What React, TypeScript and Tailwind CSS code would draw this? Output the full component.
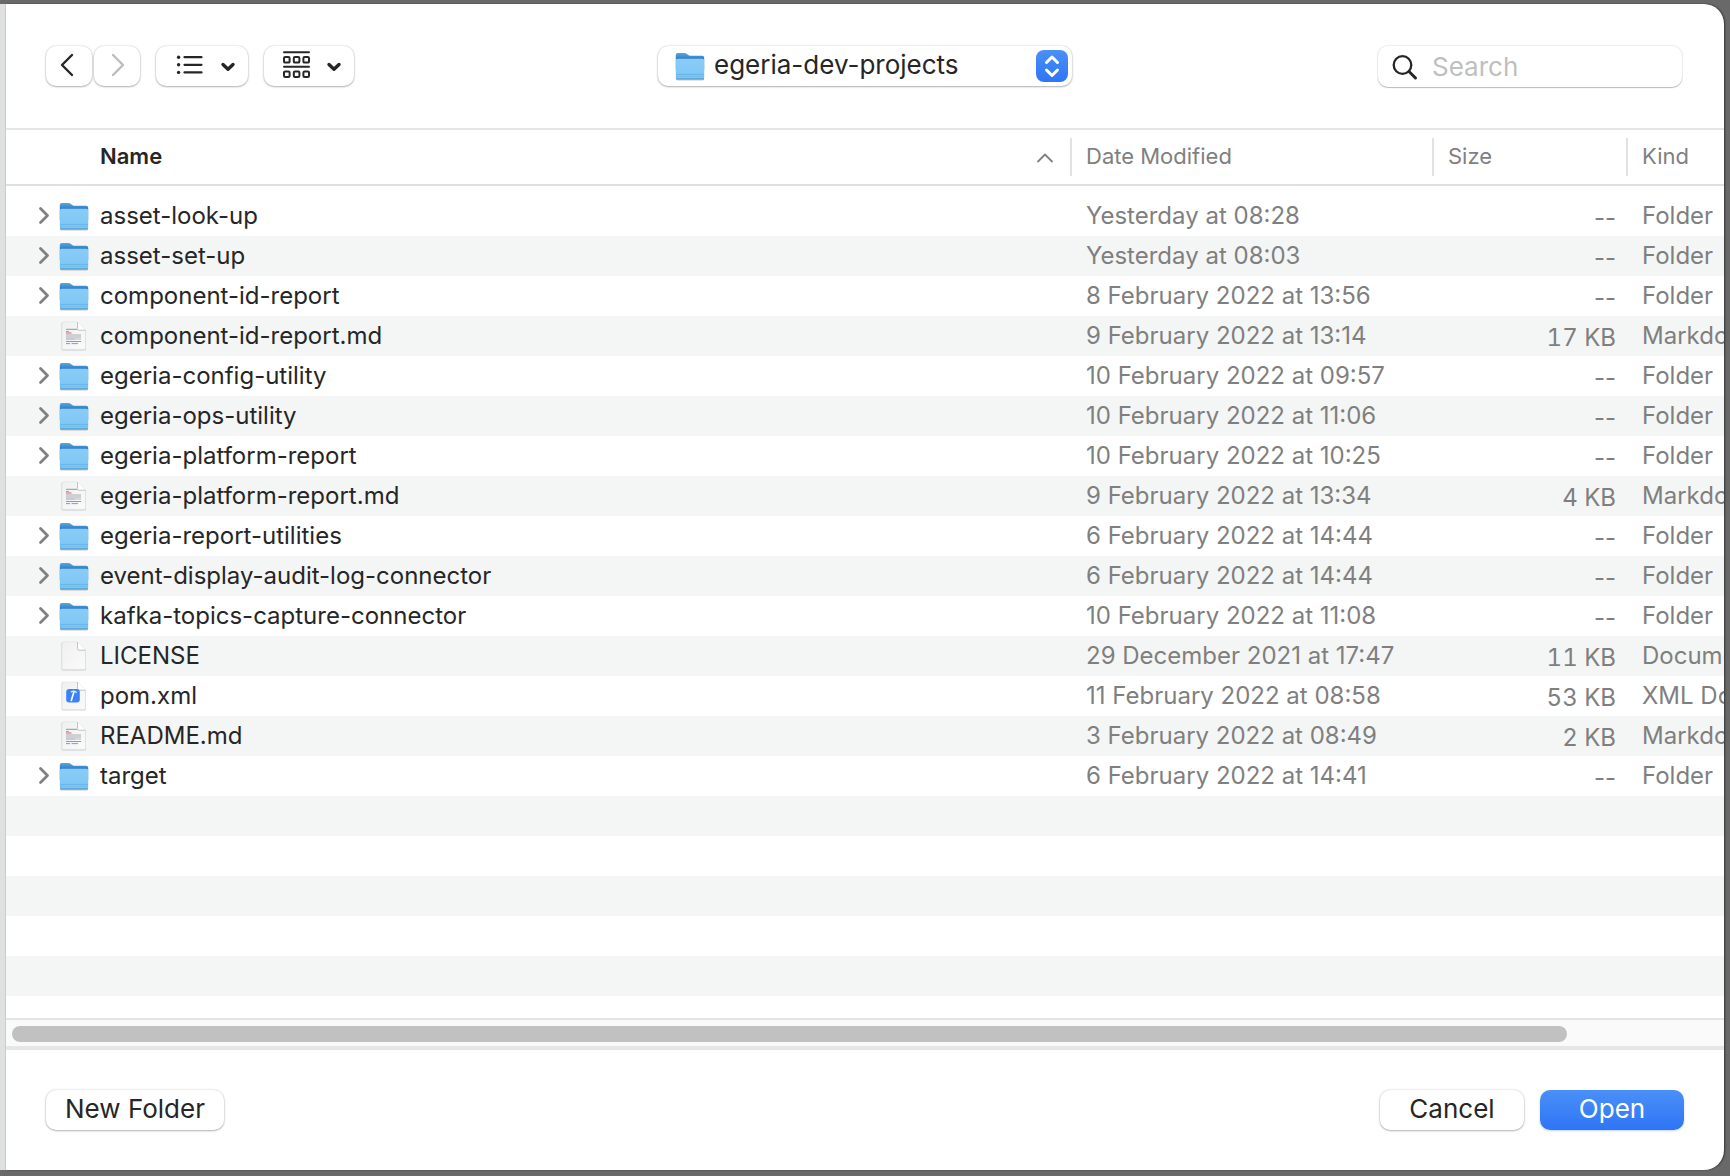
import React from "react";

type Kind = "folder" | "markdown" | "plain" | "xml";

interface Entry {
  name: string;
  date: string;
  size: string;
  kind: string;
  icon: Kind;
}

const folder = (name: string, date: string): Entry => ({ name, date, size: "--", kind: "Folder", icon: "folder" });

const entries: Entry[] = [
  folder("asset-look-up", "Yesterday at 08:28"),
  folder("asset-set-up", "Yesterday at 08:03"),
  folder("component-id-report", "8 February 2022 at 13:56"),
  { name: "component-id-report.md", date: "9 February 2022 at 13:14", size: "17 KB", kind: "Markdown Document", icon: "markdown" },
  folder("egeria-config-utility", "10 February 2022 at 09:57"),
  folder("egeria-ops-utility", "10 February 2022 at 11:06"),
  folder("egeria-platform-report", "10 February 2022 at 10:25"),
  { name: "egeria-platform-report.md", date: "9 February 2022 at 13:34", size: "4 KB", kind: "Markdown Document", icon: "markdown" },
  folder("egeria-report-utilities", "6 February 2022 at 14:44"),
  folder("event-display-audit-log-connector", "6 February 2022 at 14:44"),
  folder("kafka-topics-capture-connector", "10 February 2022 at 11:08"),
  { name: "LICENSE", date: "29 December 2021 at 17:47", size: "11 KB", kind: "Document", icon: "plain" },
  { name: "pom.xml", date: "11 February 2022 at 08:58", size: "53 KB", kind: "XML Document", icon: "xml" },
  { name: "README.md", date: "3 February 2022 at 08:49", size: "2 KB", kind: "Markdown Document", icon: "markdown" },
  folder("target", "6 February 2022 at 14:41"),
];

const raised = "rounded-[10px] bg-white shadow-[0_0_2px_rgba(0,0,0,0.22),0_1px_2px_rgba(0,0,0,0.26)]";
const columns = "grid grid-cols-[minmax(0,1fr)_362px_194px_98px]";

function Gradients() {
  return (
    <svg className="absolute size-0" aria-hidden="true">
      <defs>
        <linearGradient id="folderBack" x1="0" y1="0" x2="0" y2="1">
          <stop offset="0" stopColor="#5aa5d8" />
          <stop offset="0.15" stopColor="#4795d0" />
          <stop offset="0.33" stopColor="#2f7fc8" />
          <stop offset="1" stopColor="#3b8fd0" />
        </linearGradient>
        <linearGradient id="folderFront" x1="0" y1="0" x2="0" y2="1">
          <stop offset="0" stopColor="#8accf5" />
          <stop offset="1" stopColor="#7cc6f5" />
        </linearGradient>
        <linearGradient id="sheet" x1="0" y1="0" x2="1" y2="1">
          <stop offset="0" stopColor="#f0f0f0" />
          <stop offset="1" stopColor="#fafafa" />
        </linearGradient>
      </defs>
    </svg>
  );
}

function FolderIcon() {
  return (
    <svg className="h-8 w-[30px] shrink-0" viewBox="0 0 30 32" aria-hidden="true">
      <path d="M1.2 28.4h27.6v1.2q0 .8-.9.8H2.1q-.9 0-.9-.8z" fill="#000" opacity="0.22" />
      <path d="M.8 5q0-2 2-2h6.600q1 0 1.800.6l2 1.500q.8.600 1.800.6H27.200q2 0 2 2V20H.8z" fill="url(#folderBack)" />
      <path d="M.8 10.300q0-1.600 1.600-1.600H27.600q1.600 0 1.600 1.600V28q0 1.500-1.500 1.500H2.300Q.8 29.500.8 28z" fill="url(#folderFront)" />
      <path d="M1 24.400h28" stroke="#62aee0" strokeWidth="0.8" />
      <path d="M1 26.400h28" stroke="#6cb6e6" strokeWidth="0.600" />
      <path d="M1 28.900h28" stroke="#4a96c8" strokeWidth="1" />
    </svg>
  );
}

function DocIcon({ kind }: { kind: Kind }) {
  return (
    <svg className="h-8 w-[30px] shrink-0" viewBox="0 0 30 32" aria-hidden="true">
      <path d="M2.500 3.500q0-1.500 1.500-1.500H18.500L27 10.500V29q0 1.500-1.500 1.500H4Q2.500 30.500 2.500 29z" fill="#000" opacity="0.16" />
      <path d="M3 3.500Q3 2 4.500 2H18.500L26.500 10.200V28q0 1.500-1.500 1.500H4.500Q3 29.500 3 28z" fill="url(#sheet)" stroke="#dcdcdc" strokeWidth="0.500" />
      <path d="M18.500 2 26.500 10.200H20q-1.500 0-1.500-1.500z" fill="#fff" />
      <path d="M18.500 2V8.700q0 1.500 1.500 1.500h6.500" fill="none" stroke="#bcbcbc" strokeWidth="0.900" />
      {kind === "markdown" && (
        <g strokeWidth="1" fill="none">
          <path d="M7 9.300h11" stroke="#7fa0a6" />
          <path d="M7 11.500h3" stroke="#c98abc" />
          <path d="M7 13h5.500" stroke="#e2598c" />
          <path d="M7 15h15M7 17h15" stroke="#a8aaae" />
          <path d="M7 19h9" stroke="#9d9ac8" />
          <path d="M16 19h6" stroke="#a8c0bd" />
          <path d="M7 21.500h15" stroke="#96989c" />
          <path d="M7 23.600h4M12.500 23.600h6.500" stroke="#8d96cf" />
        </g>
      )}
      {kind === "xml" && (
        <g>
          <rect x="7.200" y="9" width="13.600" height="13.600" rx="3" fill="#3b82f6" />
          <path d="M15 11.500 12.300 20.500" stroke="#fff" strokeWidth="1.600" strokeLinecap="round" />
          <path d="M11.800 12.200q2.200-1.800 5-.4l.6 1.200" stroke="#dbe8ff" strokeWidth="1.300" fill="none" />
        </g>
      )}
    </svg>
  );
}

function DownChevron() {
  return (
    <svg className="h-10 w-4" viewBox="0 0 16 40" fill="none" stroke="#262626" strokeWidth="3.400" strokeLinecap="round" strokeLinejoin="round" aria-hidden="true">
      <path d="M3 18.500 8 23.300 13 18.500" />
    </svg>
  );
}

function Toolbar() {
  return (
    <header className="grid h-[126px] shrink-0 grid-cols-[1fr_414px_1fr] items-start border-b-2 border-[#e5e5e5] px-10 pt-[42px]">
      <div className="flex">
        <button type="button" aria-label="Back" className={`flex h-10 w-[46px] justify-center ${raised}`}>
          <svg className="h-10 w-[46px]" viewBox="0 0 46 40" fill="none" stroke="#262626" strokeWidth="2.400" strokeLinecap="round" strokeLinejoin="round">
            <path d="M26 9 16 19 26 29" />
          </svg>
        </button>
        <button type="button" aria-label="Forward" disabled className={`ml-0.5 flex h-10 w-[46px] justify-center ${raised}`}>
          <svg className="h-10 w-[46px]" viewBox="0 0 46 40" fill="none" stroke="#bcbcbc" strokeWidth="2.400" strokeLinecap="round" strokeLinejoin="round">
            <path d="M19 9 29 19 19 29" />
          </svg>
        </button>
        <button type="button" aria-label="List view" className={`ml-4 flex h-10 w-[92px] items-center justify-between pr-3 pl-5 ${raised}`}>
          <svg className="h-10 w-7" viewBox="0 0 28 40" aria-hidden="true">
            <g fill="#262626">
              <circle cx="2.600" cy="11.200" r="1.700" />
              <circle cx="2.600" cy="18.800" r="1.700" />
              <circle cx="2.600" cy="26.400" r="1.700" />
            </g>
            <path d="M8.500 11.200H25.500M8.500 18.800H25.500M8.500 26.400H25.500" stroke="#262626" strokeWidth="2.200" strokeLinecap="round" />
          </svg>
          <DownChevron />
        </button>
        <button type="button" aria-label="Group items" className={`ml-4 flex h-10 w-[90px] items-center justify-between pr-3 pl-[18px] ${raised}`}>
          <svg className="h-10 w-7" viewBox="0 0 28 40" fill="none" stroke="#262626" strokeWidth="2" strokeLinecap="round" aria-hidden="true">
            <path d="M2 6.200H27M2 20.800H27" />
            <rect x="2" y="11" width="5.600" height="5.600" rx="1.200" />
            <rect x="11.800" y="11" width="5.600" height="5.600" rx="1.200" />
            <rect x="21.400" y="11" width="5.600" height="5.600" rx="1.200" />
            <rect x="2" y="25.400" width="5.600" height="5.600" rx="1.200" />
            <rect x="11.800" y="25.400" width="5.600" height="5.600" rx="1.200" />
            <rect x="21.400" y="25.400" width="5.600" height="5.600" rx="1.200" />
          </svg>
          <DownChevron />
        </button>
      </div>

      <div className={`relative h-10 ${raised}`}>
        <div className="pointer-events-none absolute top-1 left-[17px]">
          <FolderIcon />
        </div>
        <select aria-label="Current folder" className="block h-10 w-full appearance-none rounded-[10px] bg-transparent pb-0.5 pl-14 text-[26px] leading-9 text-[#262626]">
          <option>egeria-dev-projects</option>
        </select>
        <div className="pointer-events-none absolute top-1 right-1 size-8 rounded-lg bg-linear-to-b from-[#4a90f8] to-[#2f74f5]">
          <svg className="size-8" viewBox="0 0 32 32" fill="none" stroke="#fff" strokeWidth="3" strokeLinecap="round" strokeLinejoin="round" aria-hidden="true">
            <path d="M10.500 12.500 16 7 21.500 12.500M10.500 20 16 25.500 21.500 20" />
          </svg>
        </div>
      </div>

      <label className="mr-0.5 flex h-[41px] w-[304px] items-center justify-self-end rounded-[10px] bg-white pl-3.5 shadow-[0_0_1px_1px_rgba(0,0,0,0.07),0_1px_1px_rgba(0,0,0,0.22)]">
        <svg className="size-7 shrink-0" viewBox="0 0 28 28" fill="none" stroke="#262626" strokeLinecap="round" aria-hidden="true">
          <circle cx="10.500" cy="12" r="8.800" strokeWidth="2.300" />
          <path d="M17 18.500 23.500 25" strokeWidth="3" />
        </svg>
        <input type="text" aria-label="Search" placeholder="Search" className="ml-3 w-full min-w-0 bg-transparent text-[26px] leading-10 outline-none placeholder:text-[#bfbfbf]" />
      </label>
    </header>
  );
}

function FileTable() {
  const head = "h-[38px] border-l-2 border-[#e2e2e2] pl-3.5 text-left font-normal leading-9 text-[#7f7f7f]";
  return (
    <div className="flex min-h-0 flex-1 flex-col overflow-hidden">
      <table className="block shrink-0">
        <thead className="block h-14 border-b-2 border-[#e0e0e0] text-[22px]">
          <tr className={`pt-2 ${columns}`}>
            <th aria-sort="ascending" className="flex h-[38px] items-start justify-between pr-4 pl-[94px] text-left leading-9 font-semibold text-[#262626]">
              Name
              <svg className="h-9 w-[18px]" viewBox="0 0 18 36" fill="none" stroke="#808080" strokeWidth="1.800" strokeLinecap="round" strokeLinejoin="round" aria-hidden="true">
                <path d="M2 23.500 9 16.500 16 23.500" />
              </svg>
            </th>
            <th className={head}>Date Modified</th>
            <th className={head}>Size</th>
            <th className={head}>Kind</th>
          </tr>
        </thead>
        <tbody className="block pt-2.5 text-2xl leading-10 text-[#7f7f7f]">
          {entries.map((e) => (
            <tr key={e.name} className={`h-10 items-start whitespace-nowrap even:bg-[#f4f5f5] ${columns}`}>
              <td className="flex h-10 items-center pl-[30px] leading-10 text-[#262626]">
                {e.icon === "folder" ? (
                  <button type="button" aria-label={`Expand ${e.name}`} className="mr-[7px] h-10 w-4">
                    <svg className="h-10 w-4" viewBox="0 0 16 40" fill="none" stroke="#808080" strokeWidth="2.800" strokeLinecap="round" strokeLinejoin="round">
                      <path d="M4.500 12.500 11.500 19.500 4.500 26.500" />
                    </svg>
                  </button>
                ) : (
                  <span className="mr-[7px] w-4" />
                )}
                {e.icon === "folder" ? <FolderIcon /> : <DocIcon kind={e.icon} />}
                <span className="ml-[11px]">{e.name}</span>
              </td>
              <td className="pl-4 leading-10">{e.date}</td>
              <td className={`pt-0.5 pr-2.5 text-right leading-10 ${e.icon === "folder" ? "" : "tabular-nums"}`}>{e.size}</td>
              <td className="overflow-hidden pl-4 leading-10">{e.kind}</td>
            </tr>
          ))}
        </tbody>
      </table>
      <div className="flex-1 bg-[repeating-linear-gradient(to_bottom,#f4f5f5_0_40px,#ffffff_40px_80px)]" />
    </div>
  );
}

export default function App() {
  return (
    <div className="flex h-screen bg-[#696969] pt-1 pb-1.5 font-['Inter',sans-serif]">
      <Gradients />
      <div className="w-1.5 shrink-0 border-r border-[#d0d2d1] bg-[#dfe1e0]" />
      <main className="mr-1.5 flex min-w-0 flex-1 flex-col overflow-hidden rounded-r-[20px] bg-white shadow-[1px_0_2px_rgba(0,0,0,0.5)]">
        <Toolbar />
        <FileTable />
        <div className="h-8 shrink-0 border-t-2 border-b-4 border-t-[#e5e5e5] border-b-[#e6e6e6] bg-[#fafafa] pt-1.5 pr-[157px] pl-1.5">
          <div className="h-4 rounded-full bg-[#c1c1c1]" />
        </div>
        <footer className="flex h-[120px] shrink-0 items-start px-10 pt-10 text-[26px] leading-9 text-[#262626]">
          <button type="button" className={`h-10 w-[178px] pb-0.5 ${raised}`}>New Folder</button>
          <button type="button" className={`ml-auto h-10 w-36 pb-0.5 ${raised}`}>Cancel</button>
          <button type="button" className="ml-4 h-10 w-36 rounded-[10px] bg-linear-to-b from-[#4a90f8] to-[#2f74f5] pb-0.5 text-white shadow-[0_1px_2px_rgba(47,116,245,0.3)]">Open</button>
        </footer>
      </main>
    </div>
  );
}
